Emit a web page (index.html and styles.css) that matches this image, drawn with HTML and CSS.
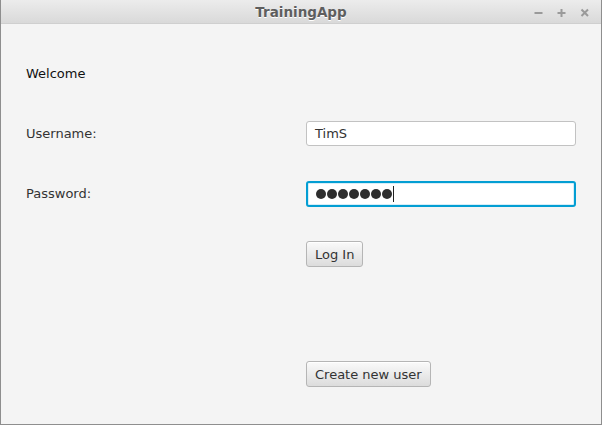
FILE: index.html
```html
<!DOCTYPE html>
<html>
<head>
<meta charset="utf-8">
<title>TrainingApp</title>
<link rel="stylesheet" href="styles.css">
</head>
<body>
<div class="window">
  <div class="titlebar">
    <div class="title">TrainingApp</div>
    <div class="controls">
      <svg class="ctl" width="10" height="10" viewBox="0 0 10 10"><rect x="0.5" y="4" width="8" height="2" fill="#9a9a9a"/></svg>
      <svg class="ctl" width="10" height="10" viewBox="0 0 10 10"><rect x="0.5" y="4" width="8" height="2" fill="#9a9a9a"/><rect x="3.5" y="1" width="2" height="8" fill="#9a9a9a"/></svg>
      <svg class="ctl" width="10" height="10" viewBox="0 0 10 10"><path d="M1.5 1.5 L8 8 M8 1.5 L1.5 8" stroke="#9a9a9a" stroke-width="2"/></svg>
    </div>
  </div>
  <div class="content">
    <div class="welcome">Welcome</div>
    <div></div>
    <div class="label">Username:</div>
    <div class="field">TimS</div>
    <div class="label">Password:</div>
    <div class="field focused"><span class="dots"><i></i><i></i><i></i><i></i><i></i><i></i><i></i></span><span class="caret"></span></div>
    <div></div>
    <div><button class="btn">Log In</button></div>
    <div></div>
    <div></div>
    <div></div>
    <div><button class="btn">Create new user</button></div>
  </div>
</div>
</body>
</html>
```

FILE: styles.css
```css
html, body {
  margin: 0;
  padding: 0;
  background: #f4f4f4;
}
.window {
  width: 602px;
  height: 425px;
  box-sizing: border-box;
  border: 1px solid #8e8e8e;
  border-top: none;
  background: #f4f4f4;
  font-family: "DejaVu Sans", sans-serif;
  font-size: 13px;
  display: flex;
  flex-direction: column;
}
.titlebar {
  height: 24px;
  flex: none;
  background: linear-gradient(#ececec, #d9d9d9);
  border-bottom: 1px solid #cfcfcf;
  box-sizing: border-box;
  position: relative;
  display: flex;
  align-items: center;
  justify-content: center;
}
.title {
  font-weight: bold;
  font-size: 13.5px;
  color: #5e5e5e;
  text-shadow: 0 1px 0 #ffffff;
}
.controls {
  position: absolute;
  right: 11px;
  top: 8px;
  display: flex;
  gap: 13px;
}
.ctl {
  display: block;
}
.content {
  flex: 1;
  display: grid;
  grid-template-columns: 280px 270px;
  grid-template-rows: repeat(6, 26px);
  row-gap: 34px;
  padding: 37px 0 0 25px;
  align-items: start;
}
.welcome {
  color: #111111;
  line-height: 26px;
}
.label {
  color: #333333;
  line-height: 25px;
}
.field {
  height: 25px;
  box-sizing: border-box;
  background: #ffffff;
  border: 1px solid #c2c2c2;
  border-radius: 3px;
  padding: 0 8px;
  display: flex;
  align-items: center;
  color: #333333;
}
.field.focused {
  height: 26px;
  border: 2px solid #039ed3;
  padding-left: 8px;
  box-shadow: inset 0 0 0 1px #d6eef8;
}
.dots {
  display: flex;
  gap: 1px;
}
.dots i {
  display: block;
  width: 10px;
  height: 10px;
  border-radius: 50%;
  background: #2e2e2e;
}
.caret {
  display: block;
  width: 1px;
  height: 16px;
  background: #222222;
  margin-left: 1px;
}
.btn {
  display: block;
  font-family: "DejaVu Sans", sans-serif;
  font-size: 13px;
  color: #333333;
  height: 26px;
  padding: 0 8px;
  border: 1px solid #b5b5b5;
  border-radius: 3px;
  background: linear-gradient(#fafafa, #dcdcdc);
  box-shadow: inset 0 1px 0 #ffffff;
}
```
